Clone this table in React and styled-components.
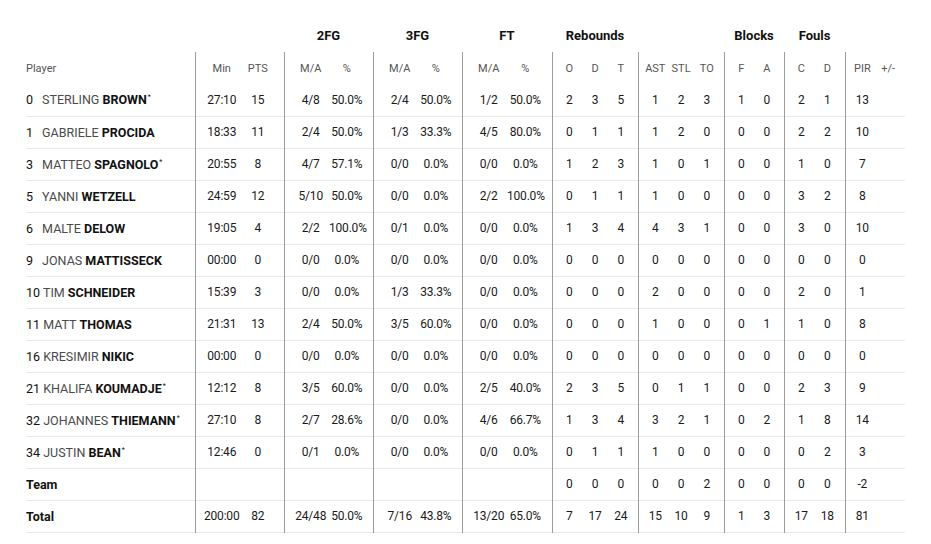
import React from 'react';
import styled, { createGlobalStyle } from 'styled-components';

const GlobalStyle = createGlobalStyle`
  body {
    margin: 0;
    background: #fff;
    font-family: Roboto, "Liberation Sans", sans-serif;
    color: #1a1a1a;
  }
`;

// column layout: width, left pad, right pad, starts a group (gets divider)
const COLS = [
  { w: 169 },
  { w: 45, pl: 8, start: true }, { w: 44, pr: 8 },
  { w: 45, pl: 8, start: true }, { w: 44, pr: 8 },
  { w: 45, pl: 8, start: true }, { w: 44, pr: 8 },
  { w: 45, pl: 8, start: true }, { w: 45, pr: 8 },
  { w: 30, pl: 4, start: true }, { w: 26 }, { w: 30, pr: 4 },
  { w: 30, pl: 4, start: true }, { w: 26 }, { w: 30, pr: 4 },
  { w: 30, pl: 4, start: true }, { w: 30, pr: 4 },
  { w: 30, pl: 4, start: true }, { w: 31, pr: 4 },
  { w: 30, pl: 4, start: true }, { w: 30, pr: 4 },
];

const GROUPS = [
  { label: '', span: 1 },
  { label: '', span: 2 },
  { label: '2FG', span: 2 },
  { label: '3FG', span: 2 },
  { label: 'FT', span: 2 },
  { label: 'Rebounds', span: 3 },
  { label: '', span: 3 },
  { label: 'Blocks', span: 2 },
  { label: 'Fouls', span: 2 },
  { label: '', span: 2 },
];

const SUBS = ['Player', 'Min', 'PTS', 'M/A', '%', 'M/A', '%', 'M/A', '%', 'O', 'D', 'T', 'AST', 'STL', 'TO', 'F', 'A', 'C', 'D', 'PIR', '+/-'];

const players = [
  ['0', 'STERLING', 'BROWN', true, '27:10 15 4/8 50.0% 2/4 50.0% 1/2 50.0% 2 3 5 1 2 3 1 0 2 1 13'],
  ['1', 'GABRIELE', 'PROCIDA', false, '18:33 11 2/4 50.0% 1/3 33.3% 4/5 80.0% 0 1 1 1 2 0 0 0 2 2 10'],
  ['3', 'MATTEO', 'SPAGNOLO', true, '20:55 8 4/7 57.1% 0/0 0.0% 0/0 0.0% 1 2 3 1 0 1 0 0 1 0 7'],
  ['5', 'YANNI', 'WETZELL', false, '24:59 12 5/10 50.0% 0/0 0.0% 2/2 100.0% 0 1 1 1 0 0 0 0 3 2 8'],
  ['6', 'MALTE', 'DELOW', false, '19:05 4 2/2 100.0% 0/1 0.0% 0/0 0.0% 1 3 4 4 3 1 0 0 3 0 10'],
  ['9', 'JONAS', 'MATTISSECK', false, '00:00 0 0/0 0.0% 0/0 0.0% 0/0 0.0% 0 0 0 0 0 0 0 0 0 0 0'],
  ['10', 'TIM', 'SCHNEIDER', false, '15:39 3 0/0 0.0% 1/3 33.3% 0/0 0.0% 0 0 0 2 0 0 0 0 2 0 1'],
  ['11', 'MATT', 'THOMAS', false, '21:31 13 2/4 50.0% 3/5 60.0% 0/0 0.0% 0 0 0 1 0 0 0 1 1 0 8'],
  ['16', 'KRESIMIR', 'NIKIC', false, '00:00 0 0/0 0.0% 0/0 0.0% 0/0 0.0% 0 0 0 0 0 0 0 0 0 0 0'],
  ['21', 'KHALIFA', 'KOUMADJE', true, '12:12 8 3/5 60.0% 0/0 0.0% 2/5 40.0% 2 3 5 0 1 1 0 0 2 3 9'],
  ['32', 'JOHANNES', 'THIEMANN', true, '27:10 8 2/7 28.6% 0/0 0.0% 4/6 66.7% 1 3 4 3 2 1 0 2 1 8 14'],
  ['34', 'JUSTIN', 'BEAN', true, '12:46 0 0/1 0.0% 0/0 0.0% 0/0 0.0% 0 1 1 1 0 0 0 0 0 2 3'],
];

const teamRow = ['', '', '', '', '', '', '', '', '0', '0', '0', '0', '0', '2', '0', '0', '0', '0', '-2', ''];
const totalRow = '200:00 82 24/48 50.0% 7/16 43.8% 13/20 65.0% 7 17 24 15 10 9 1 3 17 18 81'.split(' ').concat(['']);

const Page = styled.div`
  padding: 18px 0 0 26px;
`;

const Table = styled.table`
  table-layout: fixed;
  border-collapse: collapse;
  width: 879px;
  font-size: 12px;
`;

const GroupHead = styled.th`
  height: 34px;
  padding: 0;
  font-size: 13px;
  font-weight: 700;
  color: #111;
  text-align: center;
  vertical-align: middle;
`;

const SubHead = styled.th`
  height: 32px;
  padding: 0 ${(p) => p.$pr || 0}px 0 ${(p) => p.$pl || 0}px;
  font-size: 11px;
  font-weight: 400;
  color: #555;
  text-align: ${(p) => (p.$left ? 'left' : 'center')};
  border-left: ${(p) => (p.$start ? '1px solid #9c9c9c' : 'none')};
  white-space: nowrap;
`;

const Row = styled.tr`
  height: 32px;
  border-bottom: 1px solid #e8e8e8;
`;

const Cell = styled.td`
  padding: 0 ${(p) => p.$pr || 0}px 0 ${(p) => p.$pl || 0}px;
  text-align: center;
  color: #1a1a1a;
  white-space: nowrap;
  letter-spacing: -0.2px;
  border-left: ${(p) => (p.$start ? '1px solid #9c9c9c' : 'none')};
`;

const NameCell = styled.td`
  padding: 0;
  white-space: nowrap;
  font-size: 12.5px;
  font-weight: ${(p) => (p.$bold ? 700 : 400)};
  color: #111;
`;

const Num = styled.span`
  display: inline-block;
  min-width: 13px;
  color: #111;
`;

const First = styled.span`
  color: #4a4a4a;
`;

const Last = styled.span`
  font-weight: 700;
  color: #111;
`;

const Star = styled.sup`
  font-size: 7px;
  font-weight: 400;
  vertical-align: 5px;
  margin-left: 1px;
`;

function StatCells({ values }) {
  return values.map((v, i) => {
    const c = COLS[i + 1];
    return (
      <Cell key={i} $start={c.start} $pl={c.pl} $pr={c.pr}>
        {v}
      </Cell>
    );
  });
}

export default function App() {
  return (
    <Page>
      <GlobalStyle />
      <Table>
        <colgroup>
          {COLS.map((c, i) => (
            <col key={i} style={{ width: c.w }} />
          ))}
        </colgroup>
        <thead>
          <tr>
            {GROUPS.map((g, i) => (
              <GroupHead key={i} colSpan={g.span}>
                {g.label}
              </GroupHead>
            ))}
          </tr>
          <tr>
            {SUBS.map((s, i) => (
              <SubHead key={i} $left={i === 0} $start={COLS[i].start} $pl={COLS[i].pl} $pr={COLS[i].pr}>
                {s}
              </SubHead>
            ))}
          </tr>
        </thead>
        <tbody>
          {players.map(([no, first, last, starter, stats]) => (
            <Row key={no}>
              <NameCell>
                <Num>{no}</Num> <First>{first}</First> <Last>{last}</Last>
                {starter && <Star>*</Star>}
              </NameCell>
              <StatCells values={stats.split(' ').concat([''])} />
            </Row>
          ))}
          <Row>
            <NameCell $bold>Team</NameCell>
            <StatCells values={teamRow} />
          </Row>
          <Row>
            <NameCell $bold>Total</NameCell>
            <StatCells values={totalRow} />
          </Row>
        </tbody>
      </Table>
    </Page>
  );
}
